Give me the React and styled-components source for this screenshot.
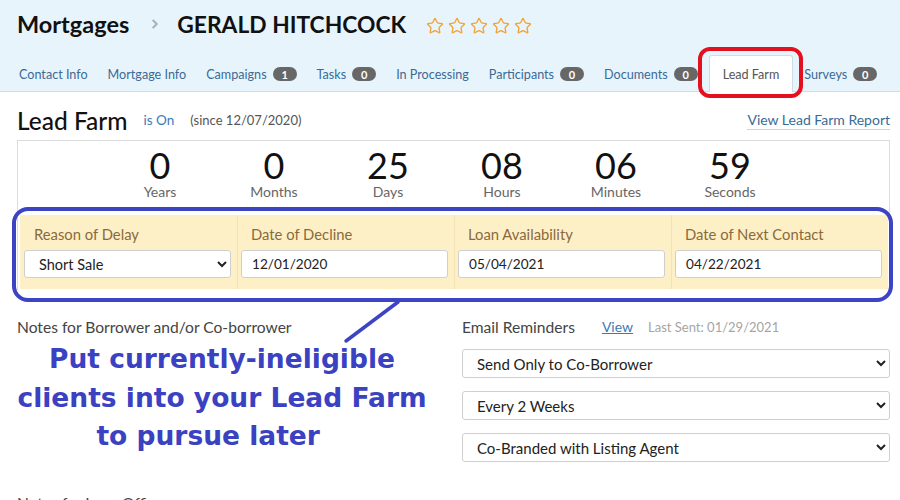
import React from 'react';
import styled, { createGlobalStyle } from 'styled-components';
import { Star, ChevronRight } from 'lucide-react';

const GlobalStyle = createGlobalStyle`
  html, body {
    margin: 0;
    padding: 0;
    background: #fff;
    font-family: Lato, "Open Sans", Arial, sans-serif;
    color: #222;
    overflow: hidden;
  }
  * { box-sizing: border-box; }
`;

// Header
const Header = styled.header`
  background: #e8f4fc;
  border-bottom: 1px solid #d3dde5;
  padding: 0 17px;
`;

const TitleRow = styled.div`
  height: 48px;
  display: flex;
  align-items: center;
`;

const Crumb = styled.h1`
  margin: 0;
  font-size: ${(p) => p.$size || 23.5}px;
  font-weight: 700;
  color: #111;
`;

const Chevron = styled.span`
  display: flex;
  margin: 0 15px 0 19px;
  color: #a9b0b8;
`;

const Stars = styled.div`
  display: flex;
  gap: 4px;
  margin-left: 20px;
  margin-top: 4px;
`;

const TabRow = styled.nav`
  display: flex;
  align-items: stretch;
  height: 37px;
  margin: 7px 0 -1px -8px;
`;

const Tab = styled.div`
  position: relative;
  display: flex;
  align-items: center;
  padding: 0 ${(p) => (p.$active ? '13px' : '9px')};
  margin: ${(p) => (p.$active ? '0 1px' : '0')};
  font-size: 12.6px;
  color: ${(p) => (p.$active ? '#555' : '#3a6a96')};
  background: ${(p) => (p.$active ? '#fff' : 'transparent')};
  border: 1px solid ${(p) => (p.$active ? '#cfdce7' : 'transparent')};
  border-bottom: none;
  border-radius: 3px 3px 0 0;
  white-space: nowrap;
`;

const Badge = styled.span`
  display: inline-flex;
  align-items: center;
  justify-content: center;
  margin-left: 6px;
  min-width: 24px;
  height: 14px;
  padding: 0 7px;
  border-radius: 7px;
  background: #676767;
  color: #fff;
  font-size: 11px;
  font-weight: 700;
`;

const RedCircle = styled.span`
  position: absolute;
  left: -12px;
  right: -11px;
  top: -9px;
  bottom: -6px;
  border: 4px solid #e3101f;
  border-radius: 12px;
  pointer-events: none;
`;

// Main
const Main = styled.main`
  padding: 0 10px 0 17px;
`;

const SectionHead = styled.div`
  display: flex;
  align-items: center;
  height: 28px;
  margin: 14px 0 6px;
`;

const SectionTitle = styled.h2`
  margin: 0;
  font-size: 24.5px;
  font-weight: 500;
  color: #111;
`;

const Status = styled.span`
  margin-left: 16px;
  font-size: 13.5px;
  color: #3a7ab8;
`;

const Since = styled.span`
  margin-left: 16px;
  font-size: 13px;
  color: #555;
`;

const ReportLink = styled.a`
  margin-left: auto;
  font-size: 14px;
  color: #3a6a96;
  text-decoration: none;
  border-bottom: 1px solid #c6d6e4;
  line-height: 18px;
`;

const CounterBox = styled.section`
  border: 1px solid #dcdcdc;
  border-bottom: none;
  padding: 0 1px 1px 2px;
`;

const Counters = styled.div`
  display: flex;
  justify-content: center;
  padding: 6px 18px 0 0;
  margin-bottom: 15px;
`;

const Counter = styled.div`
  width: 114px;
  text-align: center;
`;

const Number = styled.div`
  font-size: 36px;
  line-height: 37px;
  color: #111;
`;

const Unit = styled.div`
  font-size: 14px;
  line-height: 16px;
  color: #666;
`;

const DelayPanel = styled.div`
  position: relative;
  display: grid;
  grid-template-columns: repeat(4, 1fr);
  background: #fdf0c6;
`;

const DelayField = styled.div`
  padding: 10px 6px 11px 3px;
  border-left: 1px solid ${(p) => (p.$first ? 'transparent' : '#f2e2b4')};
`;

const DelayLabel = styled.div`
  font-size: 14.8px;
  line-height: 18px;
  color: #8a6a3c;
  padding-left: 10px;
  margin-bottom: 7px;
`;

const Select = styled.select`
  display: block;
  width: 100%;
  height: ${(p) => p.$h || 28}px;
  padding: 0 8px 0 ${(p) => p.$pad || 10}px;
  font-family: Lato, "Open Sans", Arial, sans-serif;
  font-size: ${(p) => p.$size || 14.5}px;
  color: #222;
  background: #fff;
  border: 1px solid #cfcfcf;
  border-radius: 3px;
`;

const Input = styled.input`
  display: block;
  width: 100%;
  height: 28px;
  padding: 0 10px;
  font-family: Lato, "Open Sans", Arial, sans-serif;
  font-size: 13.6px;
  color: #222;
  background: #fff;
  border: 1px solid #cfcfcf;
  border-radius: 3px;
`;

const BlueFrame = styled.span`
  position: absolute;
  left: -8px;
  right: -5px;
  top: -8px;
  bottom: -13px;
  border: 4px solid #3d44c4;
  border-radius: 16px;
  pointer-events: none;
`;

const Pointer = styled.svg`
  position: absolute;
  left: 325px;
  top: 85px;
  overflow: visible;
  pointer-events: none;
`;

const Lower = styled.div`
  display: grid;
  grid-template-columns: 1fr 1fr;
  column-gap: 17px;
  margin-top: 27px;
`;

const FieldTitle = styled.div`
  font-size: 15.6px;
  line-height: 20px;
  color: #444;
  display: flex;
  align-items: center;
  white-space: nowrap;
  margin-top: ${(p) => p.$top || 0}px;
`;

const Callout = styled.p`
  margin: 3px 0 0;
  width: 410px;
  text-align: center;
  font-family: "DejaVu Sans", Arial, sans-serif;
  font-weight: 700;
  font-size: 26.5px;
  line-height: 38.5px;
  color: #3a42c2;
  white-space: pre;
`;

const ViewLink = styled.a`
  margin-left: 27px;
  font-size: 14px;
  color: #3a7ab8;
  text-decoration: underline;
`;

const LastSent = styled.span`
  margin-left: 15px;
  font-size: 13px;
  color: #a5a5a5;
`;

const SelectStack = styled.div`
  display: flex;
  flex-direction: column;
  gap: 13px;
  margin-top: 12px;
`;

const tabs = [
  { name: 'Contact Info' },
  { name: 'Mortgage Info' },
  { name: 'Campaigns', count: 1 },
  { name: 'Tasks', count: 0 },
  { name: 'In Processing' },
  { name: 'Participants', count: 0 },
  { name: 'Documents', count: 0 },
  { name: 'Lead Farm', active: true },
  { name: 'Surveys', count: 0 },
];

const counters = [
  ['0', 'Years'],
  ['0', 'Months'],
  ['25', 'Days'],
  ['08', 'Hours'],
  ['06', 'Minutes'],
  ['59', 'Seconds'],
];

const App = () => {
  return (
    <>
      <GlobalStyle />
      <Header>
        <TitleRow>
          <Crumb>Mortgages</Crumb>
          <Chevron>
            <ChevronRight size={14} strokeWidth={3.5} />
          </Chevron>
          <Crumb $size={22.8}>GERALD HITCHCOCK</Crumb>
          <Stars>
            {[0, 1, 2, 3, 4].map((i) => (
              <Star key={i} size={18} color="#f2a335" strokeWidth={1.8} />
            ))}
          </Stars>
        </TitleRow>
        <TabRow>
          {tabs.map((t) => (
            <Tab key={t.name} $active={t.active}>
              {t.name}
              {t.count !== undefined && <Badge>{t.count}</Badge>}
              {t.active && <RedCircle />}
            </Tab>
          ))}
        </TabRow>
      </Header>

      <Main>
        <SectionHead>
          <SectionTitle>Lead Farm</SectionTitle>
          <Status>is On</Status>
          <Since>(since 12/07/2020)</Since>
          <ReportLink href="#">View Lead Farm Report</ReportLink>
        </SectionHead>

        <CounterBox>
          <Counters>
            {counters.map(([n, u]) => (
              <Counter key={u}>
                <Number>{n}</Number>
                <Unit>{u}</Unit>
              </Counter>
            ))}
          </Counters>

          <DelayPanel>
            <DelayField $first>
              <DelayLabel>Reason of Delay</DelayLabel>
              <Select defaultValue="Short Sale">
                <option>Short Sale</option>
              </Select>
            </DelayField>
            <DelayField>
              <DelayLabel>Date of Decline</DelayLabel>
              <Input defaultValue="12/01/2020" />
            </DelayField>
            <DelayField>
              <DelayLabel>Loan Availability</DelayLabel>
              <Input defaultValue="05/04/2021" />
            </DelayField>
            <DelayField>
              <DelayLabel>Date of Next Contact</DelayLabel>
              <Input defaultValue="04/22/2021" />
            </DelayField>
            <BlueFrame />
            <Pointer width="60" height="45">
              <line x1="53" y1="2" x2="1" y2="41" stroke="#3d44c4" strokeWidth="3.5" strokeLinecap="round" />
            </Pointer>
          </DelayPanel>
        </CounterBox>

        <Lower>
          <div>
            <FieldTitle>Notes for Borrower and/or Co-borrower</FieldTitle>
            <Callout>
              {'Put currently-ineligible\nclients into your Lead Farm\nto pursue later\u00a0\u00a0\u00a0'}
            </Callout>
            <FieldTitle $top={37}>Notes for Loan Officer</FieldTitle>
          </div>
          <div>
            <FieldTitle>
              Email Reminders
              <ViewLink href="#">View</ViewLink>
              <LastSent>Last Sent: 01/29/2021</LastSent>
            </FieldTitle>
            <SelectStack>
              <Select $h={29} $size={15} defaultValue="a">
                <option value="a">Send Only to Co-Borrower</option>
              </Select>
              <Select $h={29} $size={15} defaultValue="b">
                <option value="b">Every 2 Weeks</option>
              </Select>
              <Select $h={29} $size={15} defaultValue="c">
                <option value="c">Co-Branded with Listing Agent</option>
              </Select>
            </SelectStack>
          </div>
        </Lower>
      </Main>
    </>
  );
};

export default App;
